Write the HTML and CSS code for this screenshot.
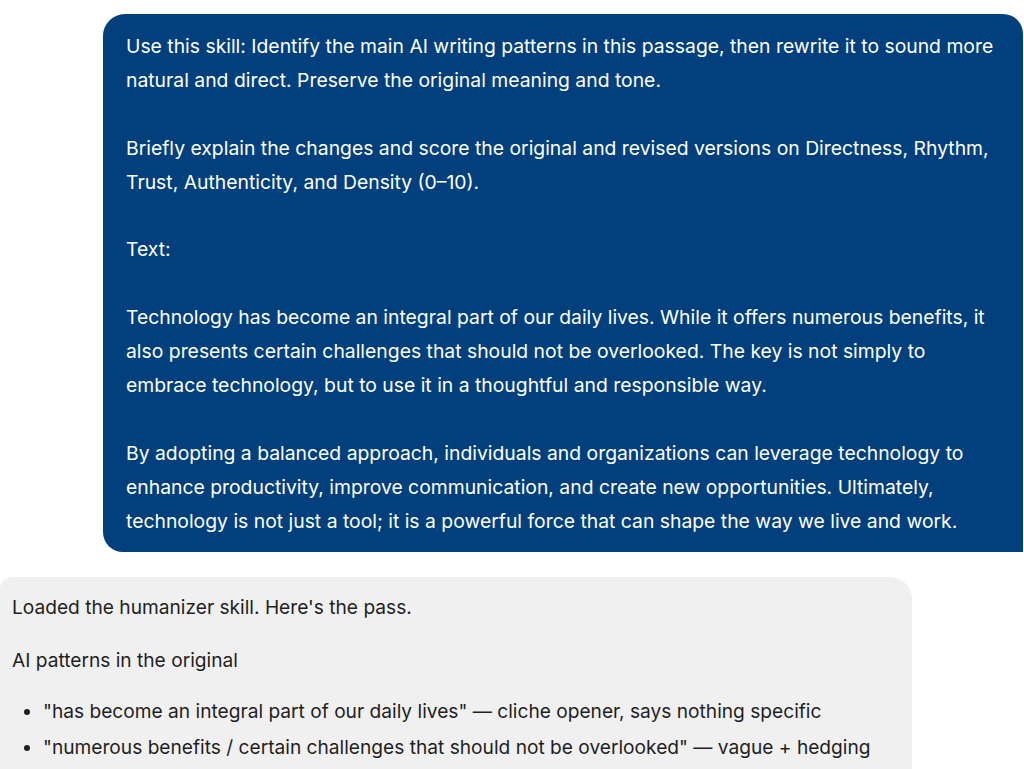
FILE: index.html
```html
<!DOCTYPE html>
<html lang="en">
<head>
<meta charset="utf-8">
<title>Chat</title>
<link rel="stylesheet" href="styles.css">
</head>
<body>
<main class="chat">
  <div class="msg msg-user">
    <p>Use this skill: Identify the main AI writing patterns in this passage, then rewrite it to sound more natural and direct. Preserve the original meaning and tone.</p>
    <p>Briefly explain the changes and score the original and revised versions on Directness, Rhythm, Trust, Authenticity, and Density (0–10).</p>
    <p>Text:</p>
    <p>Technology has become an integral part of our daily lives. While it offers numerous benefits, it also presents certain challenges that should not be overlooked. The key is not simply to embrace technology, but to use it in a thoughtful and responsible way.</p>
    <p>By adopting a balanced approach, individuals and organizations can leverage technology to enhance productivity, improve communication, and create new opportunities. Ultimately, technology is not just a tool; it is a powerful force that can shape the way we live and work.</p>
  </div>
  <div class="msg msg-bot">
    <p>Loaded the humanizer skill. Here's the pass.</p>
    <p>AI patterns in the original</p>
    <ul class="list">
      <li>"has become an integral part of our daily lives" — cliche opener, says nothing specific</li>
      <li>"numerous benefits / certain challenges that should not be overlooked" — vague + hedging</li>
    </ul>
  </div>
</main>
</body>
</html>
```
FILE: styles.css
```css
html, body {
  margin: 0;
  padding: 0;
  background: #ffffff;
}

body {
  font-family: Inter, "Noto Sans", sans-serif;
  overflow: hidden;
}

.chat {
  display: flex;
  flex-direction: column;
  padding-top: 14px;
}

.msg p {
  margin: 0;
}

.msg-user {
  align-self: flex-end;
  width: 920px;
  box-sizing: border-box;
  margin-right: 1px;
  padding: 15px 16px 14px 23px;
  background: #013f7d;
  color: #ffffff;
  font-size: 19.35px;
  line-height: 34px;
  border-radius: 22px 20px 0 20px;
}

.msg-user p + p {
  margin-top: 33.7px;
}

.msg-bot {
  align-self: flex-start;
  width: 912px;
  box-sizing: border-box;
  margin-top: 25px;
  padding: 13px 12px 40px 12px;
  background: #f0f0f0;
  color: #1f1f1f;
  font-size: 19.15px;
  line-height: 34px;
  border-radius: 12px 22px 0 0;
}

.msg-bot p + p {
  margin-top: 19px;
}

.list {
  margin: 16px 0 0 0;
  padding-left: 31px;
}

.list li {
  line-height: 36px;
}
```
